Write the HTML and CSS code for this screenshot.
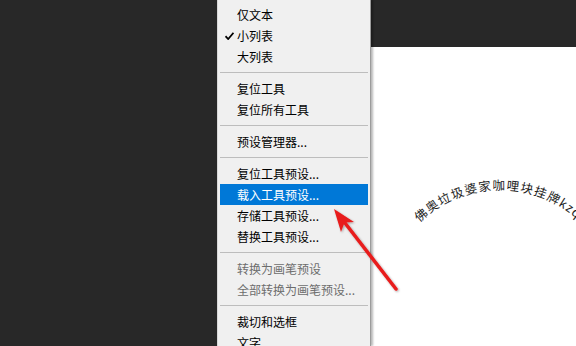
FILE: index.html
```html
<!DOCTYPE html>
<html lang="zh-CN">
<head>
    <meta charset="UTF-8">
    <meta name="viewport" content="width=device-width, initial-scale=1.0">
    <link rel="stylesheet" href="styles.css">
    <title>工具预设菜单</title>
</head>
<body>
    <div class="workspace">
        <div class="panel-left"></div>

        <div class="menu">
            <div class="item">仅文本</div>
            <div class="item checked">
                <svg class="check" width="9" height="8" viewBox="0 0 9 8">
                    <path d="M0.5 4.2 L3.2 7 L8.5 0.8" fill="none" stroke="#000" stroke-width="1.8"/>
                </svg>
                小列表
            </div>
            <div class="item">大列表</div>
            <div class="sep"></div>
            <div class="item">复位工具</div>
            <div class="item">复位所有工具</div>
            <div class="sep"></div>
            <div class="item">预设管理器...</div>
            <div class="sep"></div>
            <div class="item">复位工具预设...</div>
            <div class="item active">载入工具预设...</div>
            <div class="item">存储工具预设...</div>
            <div class="item">替换工具预设...</div>
            <div class="sep"></div>
            <div class="item disabled">转换为画笔预设</div>
            <div class="item disabled">全部转换为画笔预设...</div>
            <div class="sep"></div>
            <div class="item">裁切和选框</div>
            <div class="item">文字</div>
        </div>

        <div class="doc">
            <div class="doc-top"></div>
            <div class="canvas">
                <svg class="canvas-art" viewBox="0 0 205 299" width="205" height="299">
                    <defs>
                        <path id="arc" d="M48.4 175.6 A116 116 0 0 1 238 219.3"/>
                    </defs>
                    <text class="arc-text">
                        <textPath href="#arc">佛奥垃圾婆家咖哩块挂牌kzqw</textPath>
                    </text>
                </svg>
            </div>
        </div>
    </div>

    <svg class="arrow" width="576" height="346" viewBox="0 0 576 346">
        <defs>
            <filter id="soft" x="-20%" y="-20%" width="140%" height="140%">
                <feDropShadow dx="1" dy="1" stdDeviation="1.2" flood-color="#000" flood-opacity="0.35"/>
            </filter>
        </defs>
        <g filter="url(#soft)">
            <line x1="396" y1="289" x2="345" y2="223" stroke="#e81c1c" stroke-width="3.5" stroke-linecap="round"/>
            <polygon points="334,209 354,222 344.5,222.5 341,232" fill="#e81c1c"/>
        </g>
    </svg>
</body>
</html>
```

FILE: styles.css
```css
body {
    margin: 0;
    background-color: #282828;
    font-family: "Noto Sans CJK SC", "Noto Sans", sans-serif;
    overflow: hidden;
}

.workspace {
    display: flex;
    width: 576px;
    height: 346px;
}

.panel-left {
    width: 217px;
    background-color: #282828;
}

.menu {
    position: relative;
    z-index: 1;
    width: 148px;
    padding: 4px 2px 0 2px;
    background-color: #f0f0f0;
    border-left: 1px solid #d8d8d8;
    border-right: 1px solid #9c9c9c;
    box-shadow: 2px 0 2px rgba(0, 0, 0, 0.28);
}

.item {
    position: relative;
    height: 21px;
    line-height: 21px;
    padding-left: 17px;
    font-size: 12px;
    color: #000;
    white-space: nowrap;
}

.item.active {
    background-color: #0078d7;
    color: #fff;
}

.item.disabled {
    color: #6d6d6d;
}

.check {
    position: absolute;
    left: 5px;
    top: 7px;
}

.sep {
    height: 1px;
    margin: 5px 0;
    background-color: #bdbdbd;
}

.doc {
    flex: 1;
    display: flex;
    flex-direction: column;
}

.doc-top {
    height: 47px;
    background-color: #282828;
}

.canvas {
    flex: 1;
    background-color: #fff;
    overflow: hidden;
}

.canvas-art {
    display: block;
}

.arc-text {
    font-family: "Noto Sans CJK SC", sans-serif;
    font-size: 12.5px;
    letter-spacing: 1.1px;
    fill: #1e1e1e;
}

.arrow {
    position: absolute;
    z-index: 2;
    left: 0;
    top: 0;
    pointer-events: none;
}
```
